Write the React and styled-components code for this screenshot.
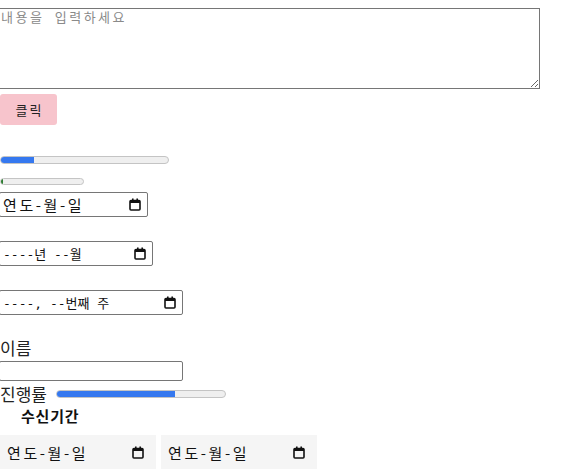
import React from "react";
import styled, { createGlobalStyle } from "styled-components";

const Global = createGlobalStyle`
  html, body { margin: 0; padding: 0; background: #fff; }
  body { font-family: "Noto Sans CJK KR", "Noto Sans", sans-serif; color: #000; }
  * { box-sizing: border-box; }
`;

const MONO = `"DejaVu Sans Mono", "Noto Sans CJK KR", monospace`;
const KR = `"Noto Sans CJK KR", "Noto Sans", sans-serif`;

const Page = styled.div`
  padding-top: 8px;
  width: 578px;
`;

const TextArea = styled.textarea`
  display: block;
  margin: 0 0 0 -1px;
  width: 541px;
  height: 81px;
  padding: 0 2px 0 1px;
  border: 1px solid #767676;
  font-family: ${MONO};
  font-size: 13px;
  line-height: 17px;
  letter-spacing: 2.5px;
  &::placeholder { color: #8a8a8a; }
`;

const Button = styled.button`
  display: block;
  margin: 5px 0 0 0;
  width: 57px;
  height: 31px;
  border: none;
  border-radius: 3px;
  background: #f7c4cc;
  color: #222;
  font-family: ${KR};
  font-size: 13px;
  letter-spacing: 2px;
  padding: 0 0 0 2px;
`;

const Track = styled.div`
  width: ${(p) => p.w}px;
  height: ${(p) => p.h || 8}px;
  margin-top: ${(p) => p.mt || 0}px;
  border: 1px solid #c4c4c4;
  border-radius: 5px;
  background: #efefef;
  overflow: hidden;
  flex: none;
`;

const Fill = styled.div`
  height: 100%;
  background: ${(p) => p.color};
`;

const FakeInput = styled.div`
  display: flex;
  align-items: center;
  justify-content: space-between;
  width: ${(p) => p.w}px;
  height: 25px;
  margin: ${(p) => p.mt || 0}px 0 0 -1px;
  padding: 0 6px 0 3px;
  border: 1px solid #767676;
  border-radius: 2px;
  font-family: ${MONO};
  font-size: 13px;
  color: #111;
  background: #fff;
`;

const Value = styled.span`
  white-space: pre;
`;

const DateValue = styled.span`
  font-family: ${KR};
  font-size: 15px;
  letter-spacing: 2.6px;
  white-space: pre;
`;

const Label = styled.div`
  font-size: 17px;
  line-height: 22px;
  margin-top: ${(p) => p.mt || 0}px;
  color: #222;
`;

const TextInput = styled.input`
  display: block;
  margin: 2px 0 0 -1px;
  width: 184px;
  height: 20px;
  border: 1px solid #767676;
  border-radius: 2px;
  padding: 1px 2px;
`;

const Row = styled.div`
  display: flex;
  align-items: center;
  gap: 9px;
  height: 22px;
  margin-top: 2px;
`;

const Legend = styled.div`
  margin: 2px 0 0 21px;
  font-size: 15px;
  font-weight: 700;
  line-height: 18px;
  letter-spacing: 0.8px;
  color: #111;
`;

const Pair = styled.div`
  display: flex;
  gap: 5px;
  margin-top: 10px;
`;

const GrayDate = styled.div`
  display: flex;
  align-items: center;
  justify-content: space-between;
  width: 156px;
  height: 34px;
  padding: 0 12px 0 7px;
  background: #f5f5f5;
  color: #111;
`;

const Cal = () => (
  <svg width="12" height="13" viewBox="0 0 12 13">
    <rect x="1" y="2.5" width="10" height="9.5" rx="1" fill="none" stroke="#111" strokeWidth="1.6" />
    <rect x="1" y="2.5" width="10" height="2.5" fill="#111" />
    <rect x="3" y="0.5" width="1.6" height="3" fill="#111" />
    <rect x="7.4" y="0.5" width="1.6" height="3" fill="#111" />
  </svg>
);

export default function App() {
  return (
    <Page>
      <Global />
      <TextArea placeholder="내용을 입력하세요" />
      <Button>클릭</Button>
      <Track w={169} mt={31}>
        <Fill color="#3578ef" style={{ width: "20%" }} />
      </Track>
      <Track w={84} h={7} mt={14}>
        <Fill color="#2e7d32" style={{ width: "3%" }} />
      </Track>
      <FakeInput w={149} mt={7}>
        <DateValue>연도-월-일</DateValue>
        <Cal />
      </FakeInput>
      <FakeInput w={154} mt={24}>
        <Value>----년 --월</Value>
        <Cal />
      </FakeInput>
      <FakeInput w={184} mt={24}>
        <Value>----, --번째 주</Value>
        <Cal />
      </FakeInput>
      <Label mt={22}>이름</Label>
      <TextInput type="text" />
      <Row>
        <Label>진행률</Label>
        <Track w={170}>
          <Fill color="#3578ef" style={{ width: "70%" }} />
        </Track>
      </Row>
      <Legend>수신기간</Legend>
      <Pair>
        <GrayDate>
          <DateValue>연도-월-일</DateValue>
          <Cal />
        </GrayDate>
        <GrayDate>
          <DateValue>연도-월-일</DateValue>
          <Cal />
        </GrayDate>
      </Pair>
    </Page>
  );
}
